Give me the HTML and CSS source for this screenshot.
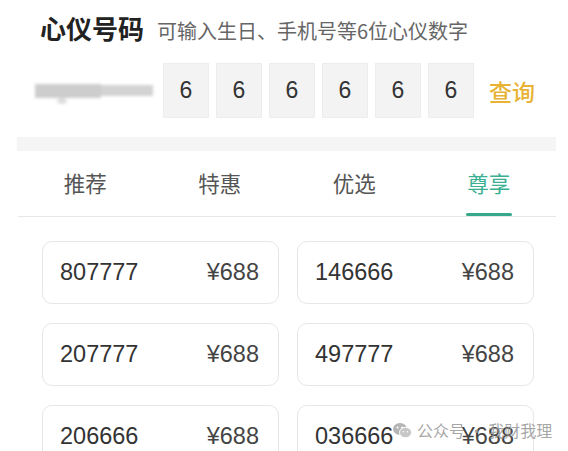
FILE: index.html
```html
<!DOCTYPE html>
<html lang="zh-CN">
<head>
    <meta charset="UTF-8">
    <meta name="viewport" content="width=device-width, initial-scale=1.0">
    <title>心仪号码</title>
    <link rel="stylesheet" href="styles.css">
</head>
<body>
    <div class="page">
        <div class="head">
            <h1>心仪号码</h1>
            <span class="hint">可输入生日、手机号等6位心仪数字</span>
        </div>

        <div class="picker">
            <div class="masked">
                <span class="m1"></span>
                <span class="m2"></span>
                <span class="m3"></span>
            </div>
            <div class="digits">
                <span class="digit">6</span>
                <span class="digit">6</span>
                <span class="digit">6</span>
                <span class="digit">6</span>
                <span class="digit">6</span>
                <span class="digit">6</span>
            </div>
            <a class="query" href="#">查询</a>
        </div>

        <div class="band"></div>

        <div class="tabs">
            <div class="tab">推荐</div>
            <div class="tab">特惠</div>
            <div class="tab">优选</div>
            <div class="tab active">尊享<i class="bar"></i></div>
        </div>

        <div class="cards">
            <div class="card"><span>807777</span><span>¥688</span></div>
            <div class="card"><span>146666</span><span>¥688</span></div>
            <div class="card"><span>207777</span><span>¥688</span></div>
            <div class="card"><span>497777</span><span>¥688</span></div>
            <div class="card"><span>206666</span><span>¥688</span></div>
            <div class="card"><span>036666</span><span>¥688</span></div>
        </div>

        <div class="mark">
            <svg width="19" height="17" viewBox="0 0 19 17">
                <ellipse cx="7" cy="7" rx="7" ry="6" fill="#b5b5b5"/>
                <ellipse cx="12.5" cy="10.5" rx="6" ry="5.2" fill="#c6c6c6" stroke="#fff" stroke-width="1"/>
                <circle cx="4.6" cy="5.6" r="1" fill="#fff"/>
                <circle cx="9" cy="5.6" r="1" fill="#fff"/>
                <circle cx="10.4" cy="9.8" r="0.8" fill="#fff"/>
                <circle cx="14.4" cy="9.8" r="0.8" fill="#fff"/>
            </svg>
            <span>公众号 · 我财我理</span>
        </div>
    </div>
</body>
</html>
```

FILE: styles.css
```css
* {
    box-sizing: border-box;
}

body {
    margin: 0;
    background: #fff;
    font-family: "Liberation Sans", "Noto Sans CJK SC", sans-serif;
    color: #333;
}

.page {
    position: relative;
    width: 568px;
    height: 451px;
    overflow: hidden;
    padding-top: 10px;
}

/* title row */
.head {
    display: flex;
    align-items: baseline;
    gap: 13px;
    height: 36px;
    padding-left: 40px;
}

.head h1 {
    margin: 0;
    font-size: 26px;
    line-height: 36px;
    font-weight: bold;
    color: #222;
    font-family: "Noto Sans CJK SC", sans-serif;
}

.hint {
    font-size: 20px;
    color: #666;
    font-family: "Noto Sans CJK SC", sans-serif;
}

/* number picker */
.picker {
    display: flex;
    align-items: center;
    height: 55px;
    margin-top: 17px;
    padding-left: 33px;
}

.masked {
    position: relative;
    width: 122px;
    height: 30px;
    margin-right: 8px;
    filter: blur(1.5px);
}

.masked span {
    position: absolute;
    background: #cdcdcd;
}

.masked .m1 {
    left: 2px;
    top: 8px;
    width: 66px;
    height: 14px;
}

.masked .m2 {
    left: 68px;
    top: 9px;
    width: 52px;
    height: 11px;
    background: #d3d3d3;
}

.masked .m3 {
    left: 24px;
    top: 22px;
    width: 10px;
    height: 6px;
    border-radius: 50%;
    background: #dcdcdc;
}

.digits {
    display: flex;
    gap: 7px;
}

.digit {
    width: 46px;
    height: 55px;
    display: flex;
    align-items: center;
    justify-content: center;
    background: #f3f3f3;
    border: 1px solid #ededed;
    font-size: 23px;
    color: #333;
}

.query {
    margin-left: 15px;
    font-size: 23px;
    font-weight: 500;
    color: #e8b334;
    text-decoration: none;
    font-family: "Noto Sans CJK SC", sans-serif;
}

.band {
    height: 14px;
    margin: 19px 12px 0 17px;
    background: #f5f5f5;
}

/* tabs */
.tabs {
    display: grid;
    grid-template-columns: repeat(4, 1fr);
    height: 66px;
    margin: 0 12px 0 18px;
    border-bottom: 1px solid #e6e6e6;
}

.tab {
    display: flex;
    flex-direction: column;
    align-items: center;
    padding-top: 17px;
    font-size: 21.5px;
    line-height: 30px;
    color: #555;
    font-family: "Noto Sans CJK SC", sans-serif;
}

.tab.active {
    color: #3aaf92;
}

.tab .bar {
    display: block;
    width: 46px;
    height: 3px;
    margin-top: auto;
    border-radius: 2px;
    background: #35a98a;
}

/* number cards */
.cards {
    display: grid;
    grid-template-columns: 237px 237px;
    column-gap: 18px;
    row-gap: 19px;
    padding: 24px 0 0 42px;
}

.card {
    height: 63px;
    display: flex;
    align-items: center;
    justify-content: space-between;
    padding: 0 19px 0 17px;
    border: 1px solid #e6e6e6;
    border-radius: 10px;
    font-size: 23.5px;
    color: #333;
}

.card span:last-child {
    color: #444;
}

.mark {
    position: absolute;
    left: 393px;
    top: 418px;
    display: flex;
    align-items: center;
    gap: 5px;
    font-size: 16px;
    color: rgba(150, 150, 150, 0.85);
    font-family: "Noto Sans CJK SC", sans-serif;
}
```
